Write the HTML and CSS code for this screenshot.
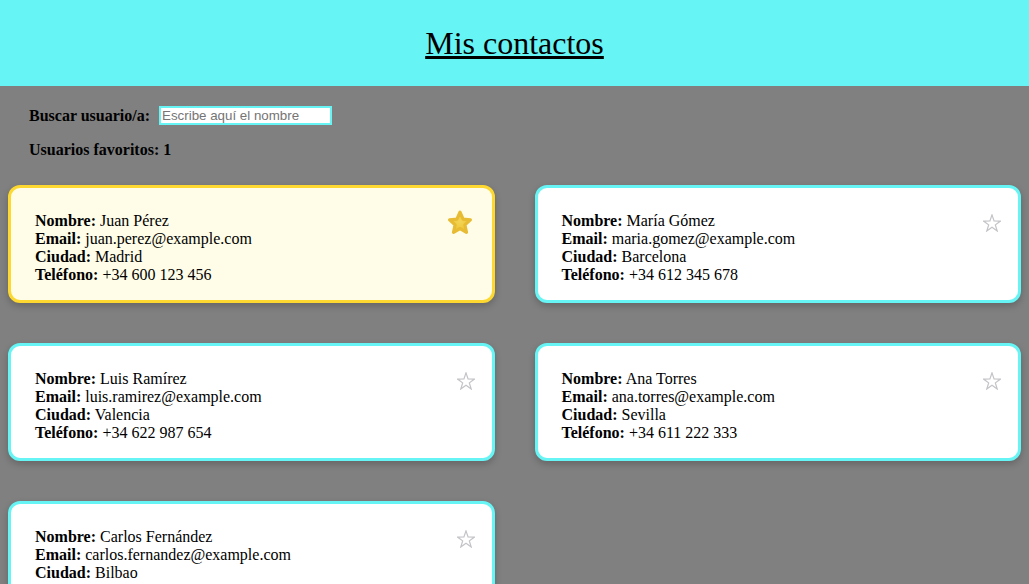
FILE: index.html
```html
<!DOCTYPE html>
<html lang="es">
<head>
<meta charset="utf-8">
<title>Mis contactos</title>
<link rel="stylesheet" href="styles.css">
</head>
<body>
<header class="header">
  <h1 class="title">Mis contactos</h1>
</header>
<main class="main">
  <div class="search">
    <label class="search-label" for="buscar">Buscar usuario/a:</label>
    <input class="search-input" id="buscar" type="text" placeholder="Escribe aquí el nombre">
  </div>
  <p class="favs">Usuarios favoritos: 1</p>
  <section class="grid">
    <article class="card card-fav">
      <div class="info">
        <div><b>Nombre:</b> Juan Pérez</div>
        <div><b>Email:</b> juan.perez@example.com</div>
        <div><b>Ciudad:</b> Madrid</div>
        <div><b>Teléfono:</b> +34 600 123 456</div>
      </div>
      <button class="star-btn" type="button" aria-label="Quitar de favoritos">
        <svg class="star-gold" width="26" height="28" viewBox="0 0 26 28">
          <defs>
            <radialGradient id="gold" cx="50%" cy="45%" r="60%">
              <stop offset="0%" stop-color="#f3d455"/>
              <stop offset="65%" stop-color="#efc93e"/>
              <stop offset="100%" stop-color="#dcab28"/>
            </radialGradient>
          </defs>
          <polygon points="13,3.2 16.1,10.2 23.4,10.9 17.9,15.9 19.5,23.3 13,19.5 6.5,23.3 8.1,15.9 2.6,10.9 9.9,10.2" fill="url(#gold)" stroke="#e7bb33" stroke-width="3.2" stroke-linejoin="round"/>
        </svg>
      </button>
    </article>
    <article class="card">
      <div class="info">
        <div><b>Nombre:</b> María Gómez</div>
        <div><b>Email:</b> maria.gomez@example.com</div>
        <div><b>Ciudad:</b> Barcelona</div>
        <div><b>Teléfono:</b> +34 612 345 678</div>
      </div>
      <button class="star-btn" type="button" aria-label="Añadir a favoritos">
        <svg class="star-empty" width="18" height="18" viewBox="0 0 18 18"><polygon points="9,0.9 11.06,6.97 17.46,7.05 12.33,10.88 14.22,17.0 9,13.3 3.78,17.0 5.67,10.88 0.54,7.05 6.94,6.97" fill="none" stroke="#c3c3c8" stroke-width="1.2" stroke-linejoin="miter"/></svg>
      </button>
    </article>
    <article class="card">
      <div class="info">
        <div><b>Nombre:</b> Luis Ramírez</div>
        <div><b>Email:</b> luis.ramirez@example.com</div>
        <div><b>Ciudad:</b> Valencia</div>
        <div><b>Teléfono:</b> +34 622 987 654</div>
      </div>
      <button class="star-btn" type="button" aria-label="Añadir a favoritos">
        <svg class="star-empty" width="18" height="18" viewBox="0 0 18 18"><polygon points="9,0.9 11.06,6.97 17.46,7.05 12.33,10.88 14.22,17.0 9,13.3 3.78,17.0 5.67,10.88 0.54,7.05 6.94,6.97" fill="none" stroke="#c3c3c8" stroke-width="1.2" stroke-linejoin="miter"/></svg>
      </button>
    </article>
    <article class="card">
      <div class="info">
        <div><b>Nombre:</b> Ana Torres</div>
        <div><b>Email:</b> ana.torres@example.com</div>
        <div><b>Ciudad:</b> Sevilla</div>
        <div><b>Teléfono:</b> +34 611 222 333</div>
      </div>
      <button class="star-btn" type="button" aria-label="Añadir a favoritos">
        <svg class="star-empty" width="18" height="18" viewBox="0 0 18 18"><polygon points="9,0.9 11.06,6.97 17.46,7.05 12.33,10.88 14.22,17.0 9,13.3 3.78,17.0 5.67,10.88 0.54,7.05 6.94,6.97" fill="none" stroke="#c3c3c8" stroke-width="1.2" stroke-linejoin="miter"/></svg>
      </button>
    </article>
    <article class="card">
      <div class="info">
        <div><b>Nombre:</b> Carlos Fernández</div>
        <div><b>Email:</b> carlos.fernandez@example.com</div>
        <div><b>Ciudad:</b> Bilbao</div>
        <div><b>Teléfono:</b> +34 633 444 555</div>
      </div>
      <button class="star-btn" type="button" aria-label="Añadir a favoritos">
        <svg class="star-empty" width="18" height="18" viewBox="0 0 18 18"><polygon points="9,0.9 11.06,6.97 17.46,7.05 12.33,10.88 14.22,17.0 9,13.3 3.78,17.0 5.67,10.88 0.54,7.05 6.94,6.97" fill="none" stroke="#c3c3c8" stroke-width="1.2" stroke-linejoin="miter"/></svg>
      </button>
    </article>
  </section>
</main>
</body>
</html>
```

FILE: styles.css
```css
html, body {
  margin: 0;
  padding: 0;
}

body {
  background: #808080;
  font-family: "Liberation Serif", "Times New Roman", serif;
  font-size: 16px;
  color: #000;
}

.header {
  background: #66f4f4;
  padding: 25px 0 24px;
  text-align: center;
}

.title {
  margin: 0;
  font-size: 32px;
  font-weight: normal;
  line-height: 37px;
  text-decoration: underline;
}

.main {
  padding: 20px 0 40px;
}

.search {
  display: flex;
  align-items: center;
  padding: 0 29px;
  height: 19px;
}

.search-label {
  font-weight: bold;
  margin-right: 9px;
}

.search-input {
  box-sizing: border-box;
  width: 173px;
  height: 19px;
  border: 2px solid #66f4f4;
  padding: 0 1px;
  margin: 0;
  background: #fff;
  font-family: "Liberation Sans", Arial, sans-serif;
  font-size: 13.33px;
  outline: none;
}

.search-input::placeholder {
  color: #757575;
}

.favs {
  margin: 16px 0 0;
  padding: 0 29px;
  font-weight: bold;
  line-height: 18px;
}

.grid {
  display: grid;
  grid-template-columns: 1fr 1fr;
  column-gap: 40px;
  row-gap: 40px;
  padding: 0 8px;
  margin-top: 26px;
}

.card {
  display: flex;
  justify-content: space-between;
  align-items: flex-start;
  background: #fff;
  border: 3px solid #66f4f4;
  border-radius: 12px;
  padding: 24px 17px 16px 24px;
  box-shadow: 0 3px 7px rgba(0, 0, 0, 0.22);
}

.card-fav {
  background: #fffde8;
  border-color: #fcd831;
}

.info {
  line-height: 18px;
}

.star-btn {
  background: none;
  border: 0;
  padding: 0;
  margin: 0;
  display: flex;
  cursor: pointer;
}

.star-empty {
  display: block;
  margin-top: 2px;
}

.star-gold {
  display: block;
  margin-top: -3px;
  margin-right: 2px;
}
```
